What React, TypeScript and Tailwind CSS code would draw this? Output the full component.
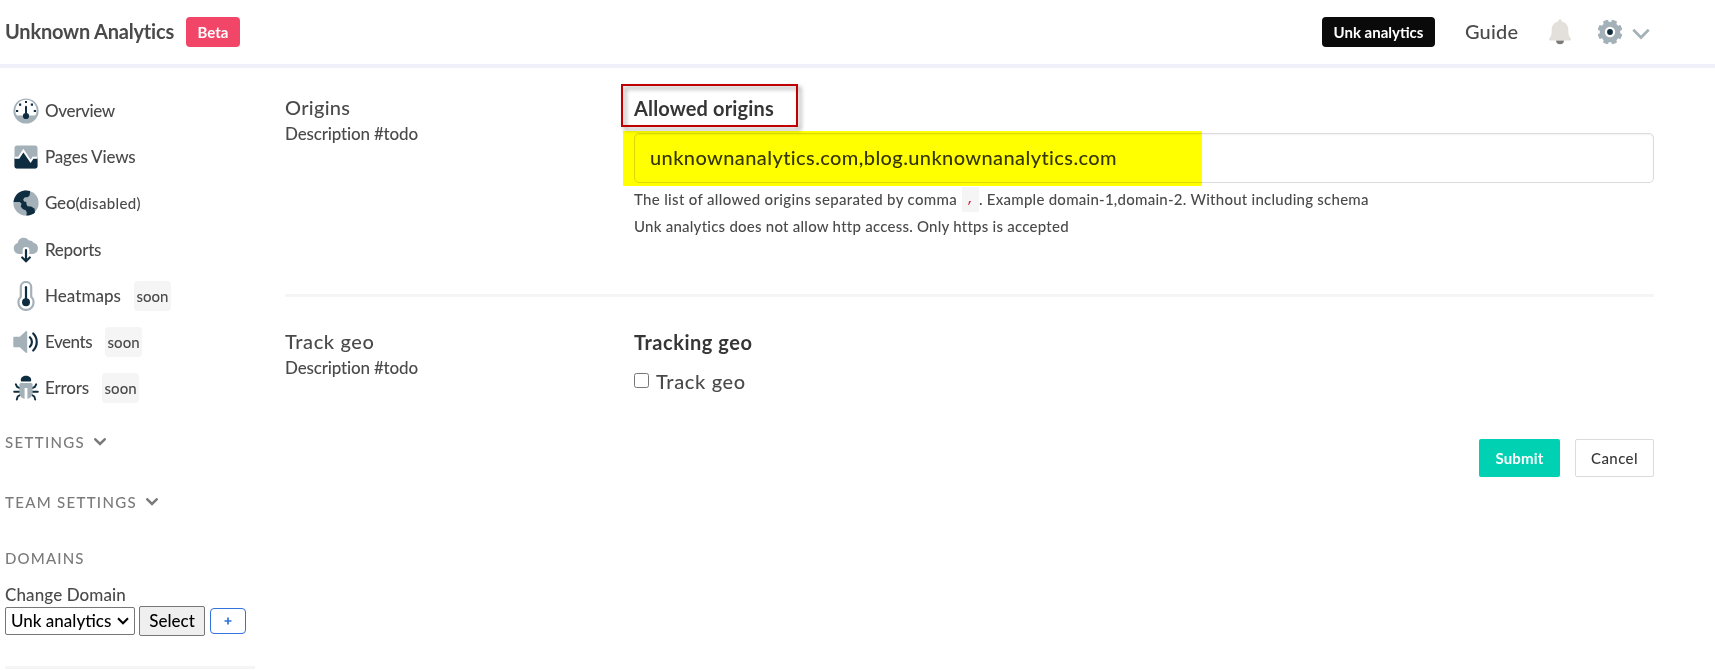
import type { ReactNode } from "react";

const LIGHT = "#a4b1b9";
const DARK = "#0f2d40";

function OverviewIcon() {
  return (
    <svg width="26" height="26" viewBox="0 0 26 26">
      <circle cx="13" cy="13" r="12.6" fill={LIGHT} />
      <path d="M3.200 16.500a10.600 10.600 0 1 1 19.600 0c-.3.8-1 1-1.800 1H5c-.8 0-1.500-.2-1.800-1z" fill="#fff" />
      <circle cx="13" cy="18" r="3.100" fill={DARK} />
      <path d="M13 8.800V18" stroke={DARK} strokeWidth="2" strokeLinecap="round" />
      <path d="M12 3h2v2h-2zM6 5.500h2.200v2.200H6zM17.800 5.500H20v2.200h-2.200zM3 12h2.200v2H3zM20.800 12H23v2h-2.200z" fill={DARK} />
    </svg>
  );
}

function PagesIcon() {
  return (
    <svg width="26" height="26" viewBox="0 0 26 26">
      <rect x="1.500" y="1.500" width="23" height="23" rx="2.500" fill={LIGHT} />
      <path d="M1.500 13.500h4L10.500 6l7 9.500 1.800-2.500h5.200v9.500a2.200 2.200 0 0 1-2.200 2H3.700a2.200 2.200 0 0 1-2.200-2z" fill={DARK} />
      <path d="M1.500 13.700h4.200L10.400 6.600l7.200 10.700 2.300-3.600h4.600" fill="none" stroke="#fff" strokeWidth="2" />
    </svg>
  );
}

function GeoIcon() {
  return (
    <svg width="26" height="26" viewBox="0 0 26 26">
      <circle cx="13" cy="13" r="12.600" fill={LIGHT} />
      <path d="M17 1.100A12.600 12.600 0 0 0 .5 12h6.300l1.700 1.800-.8 2.700 2 2.500 3.300 1.500.8 2.500-.5 2.500c4 .2 7-1.300 8.700-3l-.5-4-3.500-2-3.500-.2-1.300-2.800.3-1.500-2.500-.5-.8-2 1.300-2 3.500-.5 1.500-1.500.5-2.500z" fill={DARK} />
    </svg>
  );
}

function ReportsIcon() {
  return (
    <svg width="26" height="26" viewBox="0 0 26 26">
      <path d="M6 17a5.700 5.700 0 0 1-1.300-11.100A6.200 6.200 0 0 1 16 3.500a4.300 4.300 0 0 1 4.500 2.300A5.700 5.700 0 0 1 20 17z" fill={LIGHT} />
      <path d="M9.600 18v-4.500a3.400 3.400 0 0 1 6.800 0V18z" fill="#fff" />
      <path d="M13 13.200v10.500M9.200 20.500l3.800 3.700 3.800-3.700" fill="none" stroke={DARK} strokeWidth="2.200" strokeLinecap="round" />
    </svg>
  );
}

function HeatmapsIcon() {
  return (
    <svg width="26" height="30" viewBox="0 0 26 30">
      <path d="M7.800 6.200a5.200 5.200 0 0 1 10.400 0v9.600a7.600 7.600 0 1 1-10.400 0z" fill="#fff" stroke={LIGHT} strokeWidth="2.200" />
      <circle cx="13" cy="21.300" r="4" fill={DARK} />
      <path d="M13 6.200v14" stroke={DARK} strokeWidth="2.200" strokeLinecap="round" />
    </svg>
  );
}

function EventsIcon() {
  return (
    <svg width="26" height="26" viewBox="0 0 26 26">
      <path d="M1.300 7.800h5.500L12.500 2.400c.6-.6 1.700-.2 1.700.7v19.800c0 .9-1.100 1.300-1.700.7L6.800 18.200H1.300c-.6 0-1-.4-1-1V8.800c0-.6.4-1 1-1z" fill={LIGHT} />
      <path d="M16.900 8.300a6.500 6.500 0 0 1 0 9.400M20.200 4.500a12 12 0 0 1 0 17" fill="none" stroke={DARK} strokeWidth="2.200" strokeLinecap="round" />
    </svg>
  );
}

function ErrorsIcon() {
  return (
    <svg width="26" height="26" viewBox="0 0 26 26">
      <path d="M7.800 5.300C7.800 2.300 10 .7 13 .7s5.200 1.600 5.200 4.600c0 .8-.5 1.200-1.200 1.200H9c-.7 0-1.200-.4-1.200-1.200z" fill={DARK} />
      <path d="M2.800 9.300 4.200 12l3.300 1.300M23.200 9.300 21.800 12l-3.300 1.300M1.200 16.800h5.500M24.800 16.800h-5.500M3.800 24.500l.9-3 2.800-1.700M22.200 24.500l-.9-3-2.800-1.700" fill="none" stroke={DARK} strokeWidth="1.900" strokeLinecap="round" />
      <path d="M8 8h10a1.600 1.600 0 0 1 1.600 1.600v8c0 3.500-2.200 5.700-5.200 6.300V13h-2.800v10.900c-3-.6-5.200-2.800-5.200-6.300v-8A1.600 1.600 0 0 1 8 8z" fill={LIGHT} />
    </svg>
  );
}

function BellIcon() {
  return (
    <svg width="24" height="26" viewBox="0 0 24 26" className="shrink-0">
      <path d="M8 21.200h8a4 4 0 0 1-8 0z" fill="#7d7b79" />
      <path d="M12 .3c1 0 1.600.6 1.600 1.500v.7c4.200.8 6.700 4 6.700 8.200 0 4.500.4 6.800 2.300 8.500.9.900.4 2.300-.8 2.300H2.200c-1.200 0-1.700-1.400-.8-2.300 1.900-1.700 2.300-4 2.300-8.500 0-4.200 2.500-7.400 6.700-8.200v-.7c0-.9.600-1.500 1.600-1.500z" fill="#e3dfda" />
    </svg>
  );
}

function GearIcon() {
  return (
    <svg width="26" height="26" viewBox="-13 -13 26 26" className="shrink-0">
      <g fill={LIGHT}>
        <circle r="10.300" />
        <rect x="-2.700" y="-12.400" width="5.400" height="24.800" rx="1.200" transform="rotate(22.500)" />
        <rect x="-2.700" y="-12.400" width="5.400" height="24.800" rx="1.200" transform="rotate(67.500)" />
        <rect x="-2.700" y="-12.400" width="5.400" height="24.800" rx="1.200" transform="rotate(112.500)" />
        <rect x="-2.700" y="-12.400" width="5.400" height="24.800" rx="1.200" transform="rotate(157.500)" />
      </g>
      <circle r="5.200" fill="#fff" />
      <circle r="2.900" fill={DARK} />
    </svg>
  );
}

function SectionChevron() {
  return (
    <svg width="12" height="8" viewBox="0 0 12 8">
      <path d="M1.300 1.300 6 6l4.700-4.700" fill="none" stroke="#7a7a7a" strokeWidth="2.500" strokeLinecap="round" />
    </svg>
  );
}

function Soon() {
  return (
    <span className="ml-[13px] flex h-[30px] w-[37px] items-center justify-center rounded bg-[#f5f5f5] text-[15px]">soon</span>
  );
}

function NavItem({ icon, children }: { icon: ReactNode; children: ReactNode }) {
  return (
    <li className="flex h-[46px] items-center pl-2">
      {icon}
      <span className="ml-[6px] flex items-center">{children}</span>
    </li>
  );
}

function Header() {
  return (
    <header className="flex h-[68px] items-center border-b-4 border-[#eff0f9] pl-[5px]">
      <h1 className="w-[181px] pb-[2px] text-[20px] font-bold tracking-[-0.2px]">Unknown Analytics</h1>
      <span className="flex h-[30px] w-[54px] items-center justify-center rounded bg-[#f14668] text-[15px] font-bold text-white">Beta</span>
      <div className="ml-auto flex items-center pr-[65px]">
        <span className="flex h-[30px] w-[113px] items-center justify-center rounded bg-[#0a0a0a] text-[15px] font-bold text-white">Unk analytics</span>
        <a className="ml-[30px] w-[54px] pb-[2px] text-[20px] tracking-[0.2px]">Guide</a>
        <span className="ml-[29px] flex"><BellIcon /></span>
        <span className="ml-[25px] flex"><GearIcon /></span>
        <svg width="18" height="12" viewBox="0 0 18 12" className="mt-[3px] ml-[9px]">
          <path d="M1.300 1.800 9 9.500l7.700-7.700" fill="none" stroke={LIGHT} strokeWidth="2.700" />
        </svg>
      </div>
    </header>
  );
}

function Sidebar() {
  return (
    <aside className="w-[250px] shrink-0 pt-5 text-[17px]">
      <ul>
        <NavItem icon={<OverviewIcon />}><span className="tracking-[-0.35px]">Overview</span></NavItem>
        <NavItem icon={<PagesIcon />}><span className="tracking-[-0.2px]">Pages Views</span></NavItem>
        <NavItem icon={<GeoIcon />}>
          <span className="tracking-[-0.2px]">Geo</span>
          <span className="pt-px text-[15px] tracking-[0.33px]">(disabled)</span>
        </NavItem>
      </ul>
      <ul className="mt-px">
        <NavItem icon={<ReportsIcon />}><span className="tracking-[-0.3px]">Reports</span></NavItem>
        <NavItem icon={<HeatmapsIcon />}><span className="tracking-[0.03px]">Heatmaps</span><Soon /></NavItem>
        <NavItem icon={<EventsIcon />}><span className="tracking-[-0.48px]">Events</span><Soon /></NavItem>
        <NavItem icon={<ErrorsIcon />}><span className="tracking-[-0.15px]">Errors</span><Soon /></NavItem>
      </ul>
      <div className="mt-[17px] flex h-7 items-center gap-[9px] text-[15px] tracking-[1.33px] text-[#7a7a7a]">SETTINGS<SectionChevron /></div>
      <div className="mt-8 flex h-7 items-center gap-[9px] text-[15px] tracking-[1.3px] text-[#7a7a7a]">TEAM SETTINGS<SectionChevron /></div>
      <div className="mt-7 flex h-7 items-center text-[15px] tracking-[1.15px] text-[#7a7a7a]">DOMAINS</div>
      <label className="mt-[13px] block h-[21px] leading-5 tracking-[0.11px]">Change Domain</label>
      <div className="flex h-[30px] items-center text-black">
        <span className="flex h-7 w-[130px] items-center justify-between rounded-[2px] border border-[#767676] bg-white pr-[5px] pl-[5px]">
          Unk analytics
          <svg width="12" height="8" viewBox="0 0 12 8">
            <path d="M1 1.300 6 6.300l5-5" fill="none" stroke="#000" strokeWidth="2" />
          </svg>
        </span>
        <button className="ml-1 h-[30px] w-[66px] rounded-[2px] border border-[#767676] bg-[#efefef]">Select</button>
        <button className="ml-[5px] flex h-[26px] w-9 items-center justify-center rounded border border-[#3273dc] text-[#3273dc]">
          <svg width="8" height="8" viewBox="0 0 8 8"><path d="M4 .5v7M.5 4h7" stroke="#3273dc" strokeWidth="1.700" /></svg>
        </button>
      </div>
      <hr className="mt-[30px] h-[3px] border-0 bg-[#f5f5f5]" />
    </aside>
  );
}

function Main() {
  return (
    <main className="ml-[30px] w-[1369px] shrink-0">
      <section className="flex h-[226px] pt-[26px]">
        <div className="w-[349px] shrink-0">
          <h2 className="h-7 text-[20px] leading-[26px] tracking-[0.3px]">Origins</h2>
          <p className="h-6 text-[17px] leading-6 tracking-[-0.17px]">Description #todo</p>
        </div>
        <div className="relative flex-1">
          <div className="h-[39px] text-[20px] leading-7 font-bold tracking-[0.15px] text-[#363636]">Allowed origins</div>
          <div className="flex h-[50px] items-center rounded-[5px] border border-[#dbdbdb] pb-[2px] pl-[15px] text-[20px] tracking-[0.4px] text-[#363636] shadow-[inset_0_1px_2px_rgba(10,10,10,0.05)]">
            unknownanalytics.com,blog.unknownanalytics.com
          </div>
          <div className="mt-[3px] flex h-[27px] items-center text-[15px]">
            <span className="w-[328px] tracking-[0.33px]">The list of allowed origins separated by comma</span>
            <code className="flex h-[25px] w-[17px] items-center justify-center bg-[#f5f5f5] font-['Liberation_Mono',monospace] text-[13px] text-[#da1039]">,</code>
            <span className="tracking-[0.25px]">. Example domain-1,domain-2. Without including schema</span>
          </div>
          <p className="h-[27px] text-[15px] leading-[27px] tracking-[0.24px]">Unk analytics does not allow http access. Only https is accepted</p>
          <div className="absolute top-[-10px] left-[-13px] h-[43px] w-[177px] border-2 border-[#c00000] drop-shadow-[3px_3px_2px_rgba(0,0,0,0.4)]" />
          <div className="absolute top-[37px] left-[-11px] h-[55px] w-[579px] bg-[#ffff00] mix-blend-multiply" />
        </div>
      </section>
      <hr className="h-[3px] border-0 bg-[#f5f5f5]" />
      <section className="flex pt-[31px]">
        <div className="w-[349px] shrink-0">
          <h2 className="h-7 text-[20px] leading-[26px] tracking-[0.6px]">Track geo</h2>
          <p className="h-6 text-[17px] leading-6 tracking-[-0.17px]">Description #todo</p>
        </div>
        <div className="flex-1">
          <div className="h-[39px] text-[20px] leading-7 font-bold tracking-[0.53px] text-[#363636]">Tracking geo</div>
          <label className="flex h-7 items-center text-[20px] tracking-[0.65px]">
            <span className="mr-[7px] mb-px h-[15px] w-[15px] rounded-[2.5px] border border-[#767676] bg-white" />
            Track geo
          </label>
        </div>
      </section>
      <div className="mt-[44px] flex justify-end gap-[15px] text-[15px]">
        <button className="h-[38px] w-[81px] rounded-[2px] bg-[#00d1b2] font-bold tracking-[0.16px] text-white">Submit</button>
        <button className="h-[38px] w-[79px] rounded-[2px] border border-[#dbdbdb] bg-white tracking-[0.4px] text-[#363636]">Cancel</button>
      </div>
    </main>
  );
}

export default function App() {
  return (
    <div className="h-[670px] w-[1715px] overflow-hidden bg-white font-['Lato',sans-serif] font-medium text-[#4a4a4a]">
      <Header />
      <div className="flex pl-[5px]">
        <Sidebar />
        <Main />
      </div>
    </div>
  );
}
